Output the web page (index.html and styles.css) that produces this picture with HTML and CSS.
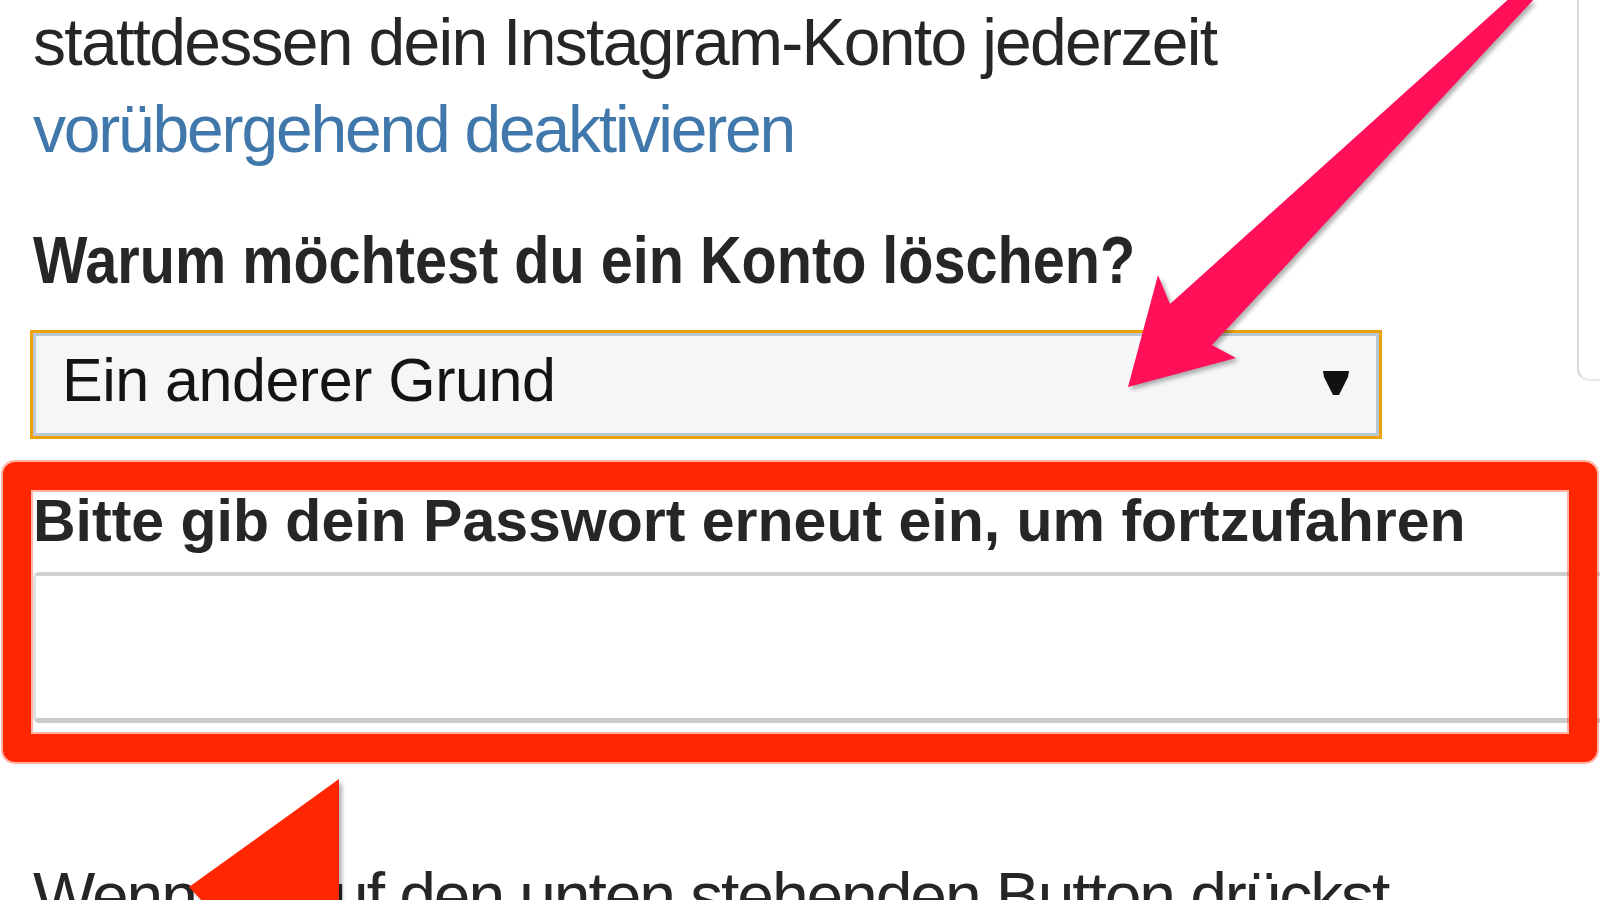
FILE: index.html
```html
<!DOCTYPE html>
<html>
  <head>
    <title>Konto löschen</title>
    <link rel="stylesheet" href="styles.css">
  </head>
  <body>
    <main class="page">
      <p class="intro">
        stattdessen dein Instagram-Konto jederzeit<br>
        <a href="#" class="link">vorübergehend deaktivieren</a>
      </p>

      <h2 class="question">Warum möchtest du ein Konto löschen?</h2>

      <div class="select">
        <span class="select-value">Ein anderer Grund</span>
        <svg class="select-caret" width="26" height="24" viewBox="0 0 26 24">
          <polygon points="0,0 26,0 25,6 16,24 10,24 1,6"></polygon>
        </svg>
      </div>

      <label class="pw-label" for="pw">Bitte gib dein Passwort erneut ein, um fortzufahren</label>
      <input class="pw-input" id="pw" type="password">

      <p class="note">Wenn du auf den unten stehenden Button drückst</p>
    </main>

    <!-- edge of the side card -->
    <div class="side-card"></div>

    <!-- screenshot annotations -->
    <div class="mark-box"></div>
    <svg class="annotations" width="1600" height="900" viewBox="0 0 1600 900">
      <polygon class="arrow" points="1128,387 1236,358 1212,345 1537,-4 1512,-4 1170,304 1158,275"></polygon>
      <polygon class="pointer" points="339,779 339,904 205,904 189,887"></polygon>
    </svg>
  </body>
</html>
```

FILE: styles.css
```css
body {
  margin: 0;
  height: 900px;
  overflow: hidden;
  position: relative;
  background: #fff;
  font-family: "Liberation Sans", Arial, sans-serif;
  color: #262626;
}
.page {
  padding-left: 33px;
}
.intro {
  margin: -1px 0 0;
  font-size: 66px;
  line-height: 87px;
  letter-spacing: -1.7px;
  white-space: nowrap;
}
.link {
  color: #4078ac;
  text-decoration: none;
  letter-spacing: -2.2px;
}
.question {
  margin: 48px 0 0;
  font-size: 66px;
  line-height: 79px;
  font-weight: bold;
  white-space: nowrap;
  transform: scaleX(0.873);
  transform-origin: left center;
}
.select {
  margin-top: 33px;
  width: 1346px;
  height: 103px;
  box-sizing: border-box;
  border: 3px solid #b9c8d4;
  outline: 3px solid #eda20c;
  background: #f5f6f8;
  display: flex;
  align-items: center;
  justify-content: space-between;
  padding: 0 27px 8px 26px;
}
.select-value {
  font-size: 61px;
  line-height: 61px;
  letter-spacing: -0.5px;
  color: #141414;
}
.select-caret {
  fill: #111;
  margin-top: 4px;
}
.pw-label {
  display: block;
  margin-top: 50px;
  font-size: 59px;
  line-height: 71px;
  font-weight: bold;
  white-space: nowrap;
}
.pw-input {
  display: block;
  margin-top: 15px;
  width: 1600px;
  height: 151px;
  box-sizing: border-box;
  border: 3px solid #e0e0e0;
  border-top: 4px solid #d0d0d0;
  border-bottom: 5px solid #cbcbcb;
  border-radius: 6px;
  background: #fff;
}
.note {
  margin: 130px 0 0;
  font-size: 66px;
  line-height: 87px;
  letter-spacing: -2.1px;
  white-space: nowrap;
}
.side-card {
  position: absolute;
  left: 1577px;
  top: -20px;
  width: 60px;
  height: 401px;
  box-sizing: border-box;
  border: 2px solid #d9d9d9;
  border-bottom-color: #e9e9e9;
  border-radius: 12px;
}
.mark-box {
  position: absolute;
  left: 3px;
  top: 462px;
  width: 1594px;
  height: 300px;
  box-sizing: border-box;
  border: 28px solid #ff2600;
  border-radius: 12px;
  box-shadow: 0 0 0 2px rgba(255, 38, 0, 0.35), inset 0 0 0 2px rgba(255, 38, 0, 0.35);
}
.annotations {
  position: absolute;
  left: 0;
  top: 0;
  pointer-events: none;
  filter: drop-shadow(3px 3px 2px rgba(0, 0, 0, 0.3));
}
.arrow {
  fill: #ff1059;
}
.pointer {
  fill: #ff2600;
}
```
